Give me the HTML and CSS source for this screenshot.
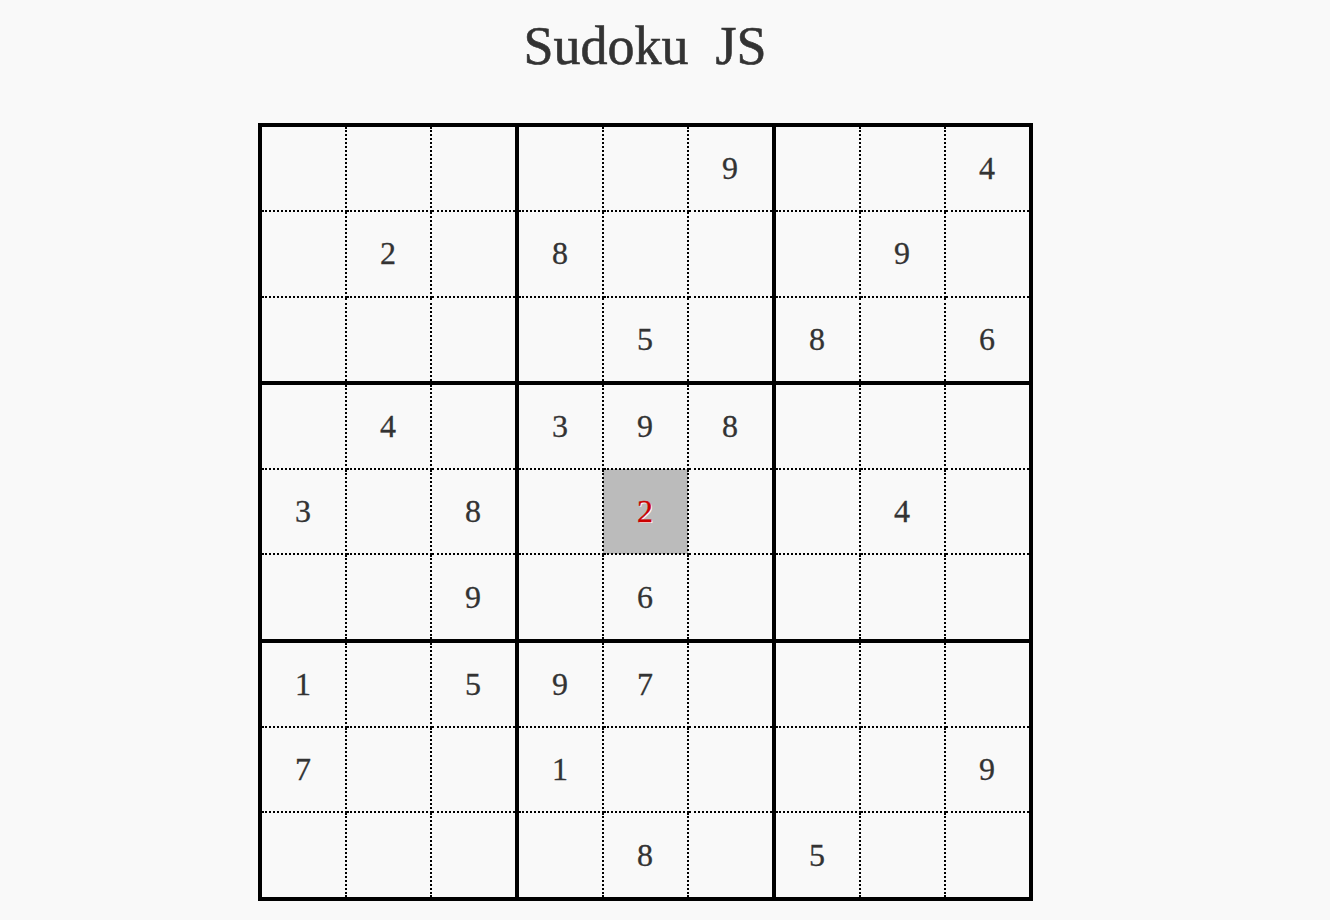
FILE: index.html
```html
<!DOCTYPE html>
<html lang="en">
<head>
    <meta charset="UTF-8">
    <title>Sudoku JS</title>
    <link rel="stylesheet" href="styles.css">
</head>
<body>
    <div class="wrapper">
        <h1>Sudoku&nbsp; JS</h1>
        <table class="board">
            <tr><td></td><td></td><td></td><td></td><td></td><td>9</td><td></td><td></td><td>4</td></tr>
            <tr><td></td><td>2</td><td></td><td>8</td><td></td><td></td><td></td><td>9</td><td></td></tr>
            <tr><td></td><td></td><td></td><td></td><td>5</td><td></td><td>8</td><td></td><td>6</td></tr>
            <tr><td></td><td>4</td><td></td><td>3</td><td>9</td><td>8</td><td></td><td></td><td></td></tr>
            <tr><td>3</td><td></td><td>8</td><td></td><td class="selected">2</td><td></td><td></td><td>4</td><td></td></tr>
            <tr><td></td><td></td><td>9</td><td></td><td>6</td><td></td><td></td><td></td><td></td></tr>
            <tr><td>1</td><td></td><td>5</td><td>9</td><td>7</td><td></td><td></td><td></td><td></td></tr>
            <tr><td>7</td><td></td><td></td><td>1</td><td></td><td></td><td></td><td></td><td>9</td></tr>
            <tr><td></td><td></td><td></td><td></td><td>8</td><td></td><td>5</td><td></td><td></td></tr>
        </table>
    </div>
</body>
</html>
```

FILE: styles.css
```css
body {
    margin: 0;
    padding: 0 40px 0 0;
    background: #f9f9f9;
    font-family: 'Liberation Serif', 'DejaVu Serif', serif;
    color: #333;
}

.wrapper {
    display: flex;
    flex-direction: column;
    align-items: center;
}

h1 {
    margin: 16px 0 47px;
    font-size: 54px;
    font-weight: normal;
    line-height: 60px;
    -webkit-text-stroke: 0.6px #333;
}

.board {
    border-collapse: collapse;
    border: 4px solid #000;
}

.board td {
    width: 83px;
    height: 83.3px;
    padding: 0;
    border: 2px dotted #000;
    text-align: center;
    vertical-align: middle;
    font-size: 32px;
    -webkit-text-stroke: 0.3px #333;
}

.board td:nth-child(3n) {
    border-right: 4px solid #000;
}

.board tr:nth-child(3n) td {
    border-bottom: 4px solid #000;
}

.board td.selected {
    background: #bbb;
    color: #c00;
    -webkit-text-stroke: 0.3px #c00;
    text-shadow: 1px 1px 0 #fff;
}
```
